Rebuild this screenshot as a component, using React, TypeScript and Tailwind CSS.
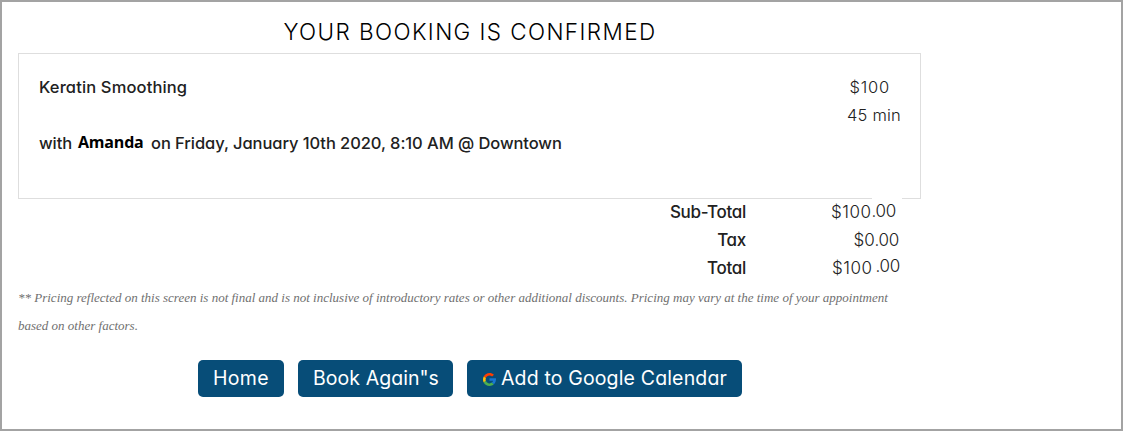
import type { ReactNode } from 'react';
import { clsx } from 'clsx';

const totals = [
  { label: 'Sub-Total', whole: '$100', cents: '.00', inset: 'pr-[19px]', wholeStyle: 'tracking-[0.5px]', centsStyle: 'pr-1.5 pb-0.5' },
  { label: 'Tax', whole: '$0', cents: '.00', inset: 'pr-[22px]', wholeStyle: 'tracking-[-0.1px]', centsStyle: '' },
  { label: 'Total', whole: '$100', cents: '.00', inset: 'pr-[21px]', wholeStyle: 'mr-[3px] tracking-[0.5px]', centsStyle: 'pb-1' },
];

function GoogleIcon() {
  return (
    <svg viewBox="4 4 40 40" className="w-[13px] h-[13px] shrink-0 mt-0.5">
      <path fill="#ff3d00" d="M6.3 14.7l6.6 4.8C14.7 15.1 19 12 24 12c3.1 0 5.8 1.2 8 3l5.7-5.7C34 6.1 29.3 4 24 4 16.3 4 9.7 8.3 6.3 14.7z" />
      <path fill="#ffc107" d="M6.3 14.7C4.8 17.5 4 20.6 4 24c0 3.2.8 6.3 2.2 9l6.5-5A12 12 0 0 1 12.9 19.5z" />
      <path fill="#4caf50" d="M24 44c5.2 0 9.9-2 13.4-5.200l-6.200-5.200A12 12 0 0 1 12.7 28l-6.500 5C9.5 39.6 16.2 44 24 44z" />
      <path fill="#1976d2" d="M43.6 20H24v8h11.300a12 12 0 0 1-4.100 5.600l6.200 5.200C37 39.2 44 34 44 24c0-1.300-.1-2.700-.4-4z" />
    </svg>
  );
}

function ActionButton({ children, className }: { children: ReactNode; className: string }) {
  return (
    <button
      type="button"
      className={clsx(
        'h-[37px] rounded-[5px] bg-[#074d78] pb-px text-white text-[19.5px] flex items-center justify-center whitespace-nowrap',
        className
      )}
    >
      {children}
    </button>
  );
}

export default function App() {
  return (
    <div className="w-full h-[431px] bg-white border-2 border-[#a3a3a3] pl-4 pt-4 overflow-hidden text-[16.5px] leading-7 text-[#212121] font-['Inter',sans-serif] [font-feature-settings:'cv11']">
      <div className="w-[903px]">
        <h1 className="h-[35px] pl-px text-center text-[22.5px] font-light tracking-[1.4px] text-black whitespace-nowrap">
          YOUR BOOKING IS CONFIRMED
        </h1>

        <div className="h-[146px] border border-[#dedede] pl-5 pr-[19px] pt-[19px] flex justify-between">
          <div className="flex flex-col gap-7 font-medium whitespace-nowrap">
            <p className="tracking-[0.14px]">Keratin Smoothing</p>
            <p className="flex tracking-[-0.07px]">
              <span className="w-[39px]">with</span>
              <span className="w-[73px] pt-px text-base font-bold text-black tracking-[-0.2px] font-['Open_Sans',sans-serif]">Amanda</span>
              <span>on Friday, January 10th 2020, 8:10 AM @ Downtown</span>
            </p>
          </div>
          <div className="text-right font-light whitespace-nowrap">
            <p className="pr-[11px] tracking-[0.8px]">$100</p>
            <p className="tracking-[0.2px]">45 min</p>
          </div>
        </div>

        <div className="-mt-px text-[17px]">
          {totals.map((t) => (
            <div key={t.label} className="h-7 flex">
              <p className="w-[728px] text-right font-medium tracking-[-0.3px]">{t.label}</p>
              <p className={clsx('flex-1 flex justify-end items-center font-light', t.inset)}>
                <span className={t.wholeStyle}>{t.whole}</span>
                <span className={clsx('bg-white tracking-[-0.3px]', t.centsStyle)}>{t.cents}</span>
              </p>
            </div>
          ))}
        </div>

        <p className="mt-[2px] text-[13px] italic text-[#707070] whitespace-nowrap font-['Liberation_Serif',serif]">
          ** Pricing reflected on this screen is not final and is not inclusive of introductory rates or other additional discounts. Pricing may vary at the time of your appointment
          <br />
          based on other factors.
        </p>

        <div className="mt-5 pl-[180px] flex gap-3.5">
          <ActionButton className="w-[86px] tracking-[0.3px]">Home</ActionButton>
          <ActionButton className="w-[155px] pl-px tracking-[0.05px]">Book Again"s</ActionButton>
          <ActionButton className="w-[275px] pl-px gap-[5px] tracking-[0.15px]">
            <GoogleIcon />
            Add to Google Calendar
          </ActionButton>
        </div>
      </div>
    </div>
  );
}
